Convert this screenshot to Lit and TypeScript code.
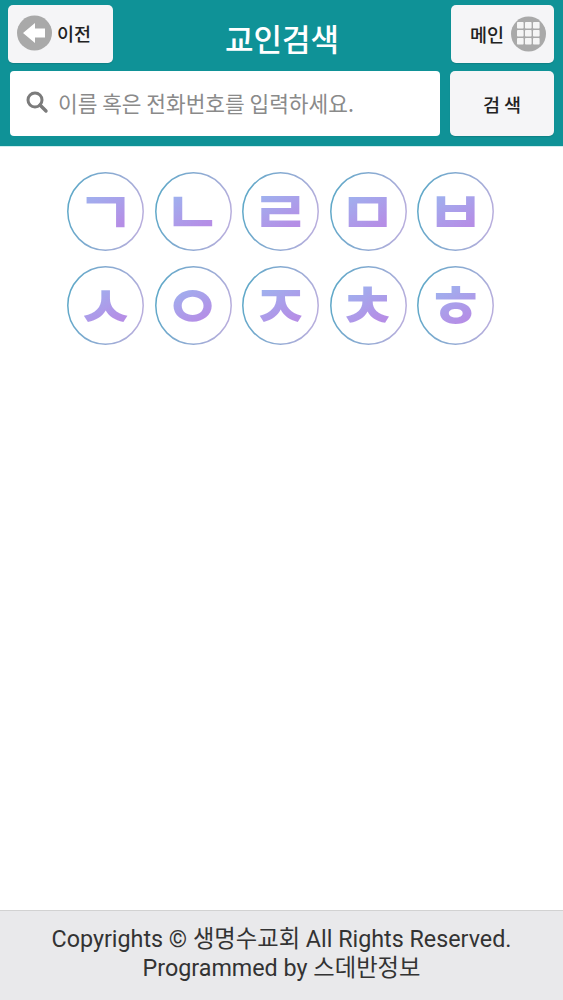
import { LitElement, html, css, svg } from "lit";
import { customElement } from "lit/decorators.js";

const ROWS = [
  ["ㄱ", "ㄴ", "ㄹ", "ㅁ", "ㅂ"],
  ["ㅅ", "ㅇ", "ㅈ", "ㅊ", "ㅎ"],
];

const ringGradient = svg`<defs><linearGradient id="ring" x1="0" y1="0.4" x2="1" y2="0.6"><stop offset="0" stop-color="#5fa8c8"/><stop offset="1" stop-color="#b9aedd"/></linearGradient></defs>`;

const CELLS = [0, 1, 2].flatMap((r) => [0, 1, 2].map((c) => [c, r]));

@customElement("app-root")
export class AppRoot extends LitElement {
  static styles = css`
    :host {
      display: flex;
      flex-direction: column;
      height: 1000px;
      background: #fff;
      font-family: "Noto Sans CJK KR", "Noto Sans", sans-serif;
      color: #222;
    }
    .header {
      background: #0f9297;
      height: 146px;
      box-sizing: border-box;
      padding: 5px 9px 10px 8px;
      display: flex;
      flex-direction: column;
      gap: 8px;
      box-shadow: 0 1px 0 #cfeeee;
    }
    .top {
      display: flex;
      justify-content: space-between;
      align-items: center;
      height: 58px;
    }
    .btn {
      background: #f5f5f7;
      border-radius: 5px;
      display: flex;
      align-items: center;
      justify-content: center;
      box-sizing: border-box;
      font-size: 18.5px;
      font-weight: 500;
      color: #222;
      box-shadow: 0 1px 1px rgba(0, 0, 0, 0.12);
    }
    .back {
      width: 105px;
      height: 58px;
      gap: 5px;
      padding-bottom: 2px;
      padding-left: 9px;
      justify-content: flex-start;
    }
    .main {
      width: 103px;
      height: 58px;
      gap: 7px;
      padding-bottom: 1px;
      padding-left: 19px;
      justify-content: flex-start;
    }
    .title {
      color: #fff;
      font-size: 31px;
      font-weight: 500;
      line-height: 1;
      position: relative;
      top: 3px;
    }
    .bottom { display: flex; height: 65px; padding-left: 2px; gap: 10px; }
    .input {
      flex: 1;
      background: #fff;
      border-radius: 4px;
      display: flex;
      align-items: center;
      gap: 9px;
      padding-left: 15px;
      padding-bottom: 3px;
      font-size: 21.4px;
      color: #8a8a8a;
      white-space: nowrap;
    }
    .search { width: 104px; height: 65px; }
    .pad {
      flex: 1;
      padding: 26px 2px 0 0;
      display: flex;
      flex-direction: column;
      gap: 15px;
      align-items: center;
    }
    .row { display: flex; gap: 10.5px; }
    .key {
      position: relative;
      width: 77px;
      height: 79px;
      box-sizing: border-box;
      padding-bottom: 6px;
      display: flex;
      align-items: center;
      justify-content: center;
    }
    .key svg { position: absolute; inset: 0; }
    .glyph {
      position: relative;
      font-size: 60px;
      font-weight: 700;
      line-height: 1;
      background: linear-gradient(150deg, #9db4ef 20%, #b58ee6 75%);
      -webkit-background-clip: text;
      background-clip: text;
      color: transparent;
      transform: scaleX(1.08);
    }
    .footer {
      height: 90px;
      box-sizing: border-box;
      background: #e9e9eb;
      border-top: 1px solid #d2d2d2;
      padding-top: 14px;
      text-align: center;
      font-family: Roboto, "Noto Sans CJK KR", sans-serif;
      font-size: 23.3px;
      line-height: 29px;
      color: #333;
    }
    .footer span { display: block; white-space: nowrap; }
  `;

  render() {
    return html`
      <div class="header">
        <div class="top">
          <div class="btn back">
            <svg width="35" height="36" viewBox="0 0 35 36">
              <circle cx="17.5" cy="18" r="17.5" fill="#a9a9a9" />
              <path d="M6 18 L18 8 V13.5 H28 V22.5 H18 V28 Z" fill="#fff" />
            </svg>
            <span>이전</span>
          </div>
          <div class="title">교인검색</div>
          <div class="btn main">
            <span>메인</span>
            <svg width="35" height="36" viewBox="0 0 35 36">
              <circle cx="17.5" cy="18" r="17.5" fill="#a9a9a9" />
              ${CELLS.map(
                ([c, r]) => svg`<rect x=${6 + c * 8} y=${6 + r * 8} width="6.6" height="6.6" rx="0.8" fill="#f5f5f5" />`
              )}
            </svg>
          </div>
        </div>
        <div class="bottom">
          <div class="input">
            <svg width="24" height="24" viewBox="0 0 24 24">
              <circle cx="10" cy="10" r="7" fill="none" stroke="#7b7b7b" stroke-width="3" />
              <path d="M15 15 L21 21" stroke="#7b7b7b" stroke-width="3.4" stroke-linecap="round" />
            </svg>
            <span>이름 혹은 전화번호를 입력하세요.</span>
          </div>
          <div class="btn search">검 색</div>
        </div>
      </div>
      <div class="pad">
        ${ROWS.map(
          (row) => html`<div class="row">
            ${row.map(
              (g) => html`<div class="key">
                <svg width="77" height="79" viewBox="0 0 77 79">
                  ${ringGradient}
                  <ellipse cx="38.5" cy="39.5" rx="37.7" ry="38.7" fill="none" stroke="url(#ring)" stroke-width="1.5" />
                </svg>
                <span class="glyph">${g}</span>
              </div>`
            )}
          </div>`
        )}
      </div>
      <div class="footer">
        <span>Copyrights © 생명수교회 All Rights Reserved.</span>
        <span>Programmed by 스데반정보</span>
      </div>
    `;
  }
}
